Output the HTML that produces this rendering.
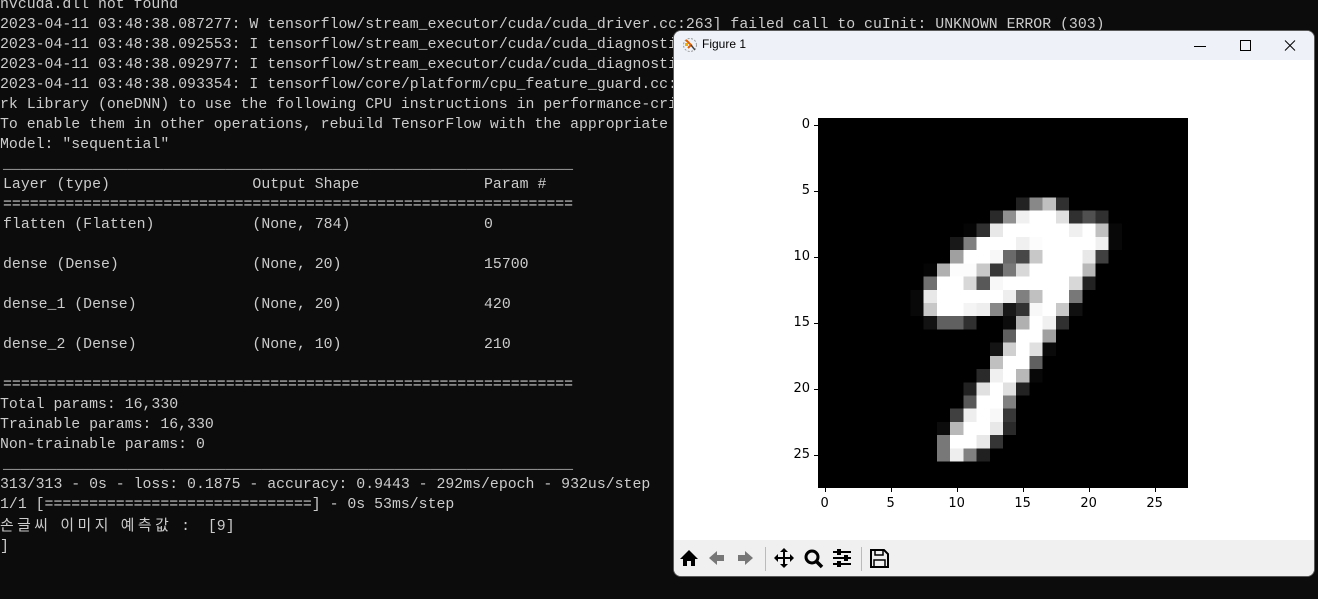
<!DOCTYPE html>
<html><head><meta charset="utf-8"><style>
body{margin:0;width:1318px;height:599px;background:#0c0c0c;overflow:hidden;position:relative;font-family:"Liberation Mono",monospace}
#term{position:absolute;left:0px;top:-5px;color:#cccccc;font-size:14.85px;line-height:20px;white-space:pre}
.t{padding-left:3px}
.k{font-family:"Noto Sans CJK KR","Liberation Mono",monospace;letter-spacing:3.5px}
#win{position:absolute;left:674px;top:31px;width:640px;height:545px;background:#fff;border-radius:7px;overflow:hidden;box-shadow:0 0 0 1px #5a5a5a}
#title{position:absolute;left:0;top:0;width:640px;height:29px;background:#eef2f8}
#title span{position:absolute;left:28px;top:6px;font:12px "Liberation Sans",sans-serif;color:#000}
#tb{position:absolute;left:0;top:509px;width:640px;height:36px;background:#f0f0f0}
.lbl{position:absolute;font:13px "DejaVu Sans","Liberation Sans",sans-serif;color:#000}
</style></head><body>
<div id="term">nvcuda.dll not found
2023-04-11 03:48:38.087277: W tensorflow/stream_executor/cuda/cuda_driver.cc:263] failed call to cuInit: UNKNOWN ERROR (303)
2023-04-11 03:48:38.092553: I tensorflow/stream_executor/cuda/cuda_diagnostics.cc:169] retrieving CUDA diagnostic information
2023-04-11 03:48:38.092977: I tensorflow/stream_executor/cuda/cuda_diagnostics.cc:176] hostname: DESKTOP
2023-04-11 03:48:38.093354: I tensorflow/core/platform/cpu_feature_guard.cc:193] This TensorFlow binary is optimized
rk Library (oneDNN) to use the following CPU instructions in performance-critical operations:  AVX AVX2
To enable them in other operations, rebuild TensorFlow with the appropriate compiler flags.
Model: "sequential"
<span class="t">________________________________________________________________</span>
<span class="t">Layer (type)                Output Shape              Param #</span>
<span class="t">================================================================</span>
<span class="t">flatten (Flatten)           (None, 784)               0</span>

<span class="t">dense (Dense)               (None, 20)                15700</span>

<span class="t">dense_1 (Dense)             (None, 20)                420</span>

<span class="t">dense_2 (Dense)             (None, 10)                210</span>

<span class="t">================================================================</span>
Total params: 16,330
Trainable params: 16,330
Non-trainable params: 0
<span class="t">________________________________________________________________</span>
313/313 - 0s - loss: 0.1875 - accuracy: 0.9443 - 292ms/epoch - 932us/step
1/1 [==============================] - 0s 53ms/step
<span class="k">손글씨</span> <span class="k">이미지</span> <span class="k">예측값</span> :  [9]
]</div>
<div id="win">
<div id="title">
<svg style="position:absolute;left:8px;top:6px" width="16" height="16" viewBox="0 0 16 16"><circle cx="8" cy="8" r="6.5" fill="none" stroke="#999" stroke-dasharray="2 1.5"/><path d="M4 3l5 5-3 3" stroke="#e06000" stroke-width="2" fill="none"/><path d="M9 8l4 5" stroke="#444" stroke-width="1.5"/><rect x="3" y="6" width="3" height="3" fill="#f0b000"/></svg>
<span>Figure 1</span>
<svg style="position:absolute;left:520px;top:8px" width="115" height="14"><line x1="0" y1="7.5" x2="12" y2="7.5" stroke="#000"/><rect x="46.5" y="1.5" width="10" height="10" fill="none" stroke="#000"/><path d="M91 1.5l10 10M101 1.5l-10 10" stroke="#000"/></svg>
</div>
<svg style="position:absolute;left:144px;top:87px" width="370" height="370" viewBox="0 0 28 28" shape-rendering="crispEdges">
<rect width="28" height="28" fill="#000"/>
<g id="px"></g>
</svg>
<div id="axes"></div>
<div id="tb">
<svg width="640" height="36" viewBox="0 0 640 36">
<path d="M6 19l9-9 9 9h-3v7h-4v-5h-4v5h-4v-7z" fill="#000"/>
<g fill="#777"><path d="M35 18l8-7v4h7v6h-7v4z"/><path d="M79 18l-8-7v4h-7v6h7v4z"/></g>
<line x1="91.5" y1="7" x2="91.5" y2="31" stroke="#bbb"/>
<path d="M110 8l4 4h-3v5h5v-3l4 4-4 4v-3h-5v5h3l-4 4-4-4h3v-5h-5v3l-4-4 4-4v3h5v-5h-3z" fill="#000"/>
<circle cx="138" cy="17" r="6" fill="none" stroke="#000" stroke-width="3"/><path d="M142 21l6 6" stroke="#000" stroke-width="3.5"/>
<g stroke="#000" stroke-width="2"><path d="M159 12h18M159 18h18M159 24h18"/></g>
<g fill="#000"><rect x="163" y="9" width="4" height="6"/><rect x="170" y="15" width="4" height="6"/><rect x="163" y="21" width="4" height="6"/></g>
<line x1="187.5" y1="7" x2="187.5" y2="31" stroke="#bbb"/>
<path d="M197 10h13l4 4v13h-17z" fill="none" stroke="#000" stroke-width="2"/><rect x="201" y="10" width="8" height="5" fill="none" stroke="#000" stroke-width="1.5"/><rect x="200" y="20" width="11" height="7" fill="none" stroke="#000" stroke-width="1.5"/>
</svg>
</div>
</div>
<script>
var d={6:{15:0x22,16:0x88,17:0xc0,18:0x30},
7:{13:0x2a,14:0x90,15:0xf0,16:255,17:255,18:0xe0,19:0x30,20:0x50,21:0x30},
8:{11:5,12:0x30,13:0xe8,14:255,15:255,16:255,17:255,18:255,19:0xf0,20:255,21:0xc0,22:8},
9:{10:0x18,11:0x80,12:255,13:255,14:255,15:0xf0,16:0xfc,17:255,18:255,19:255,20:255,21:0xf0,22:8},
10:{10:0xa0,11:255,12:255,13:0xf8,14:0x6a,15:0x48,16:0xc8,17:255,18:255,19:255,20:0xe8,21:0x40},
11:{8:5,9:0xb0,10:0xfc,11:0xfc,12:0xc8,13:0x38,14:0x78,15:0xd8,16:255,17:255,18:255,19:255,20:0xb8},
12:{8:0x70,9:255,10:255,11:0xd8,12:0x58,13:0xf8,14:255,15:255,16:255,17:255,18:255,19:0xd8,20:0x22},
13:{7:8,8:0xe8,9:255,10:255,11:255,12:255,13:255,14:0xee,15:0x80,16:0xc0,17:255,18:255,19:0x78},
14:{7:8,8:0xc8,9:255,10:255,11:0xf4,12:0xee,13:0x88,14:0x18,15:0x32,16:0xf8,17:255,18:0xc8,19:0x10},
15:{8:0x12,9:0x60,10:0x60,11:0x30,14:0x0c,15:0xb0,16:255,17:0xf0,18:0x30},
16:{14:0x60,15:255,16:255,17:0xa0},
17:{13:0x14,14:0xd0,15:255,16:0xe0,17:0x0a},
18:{13:0xc0,14:255,15:255,16:0x60},
19:{12:0x2a,13:0xf0,14:255,15:0xb8,16:8},
20:{11:0x22,12:0xe0,13:255,14:0xe0,15:0x22},
21:{11:0x58,12:255,13:255,14:0x80},
22:{10:0x40,11:0xee,12:255,13:0xf8,14:0x38},
23:{9:0x0c,10:0xb8,11:255,12:255,13:0xe8,14:0x2a},
24:{9:0x78,10:255,11:255,12:0xe8,13:0x35},
25:{9:0x78,10:0xee,11:0x80,12:0x20}};
var s="";for(var r in d)for(var c in d[r]){var v=d[r][c];s+='<rect x="'+c+'" y="'+r+'" width="1" height="1" fill="rgb('+v+','+v+','+v+')"/>';}
document.getElementById("px").innerHTML=s;
var a="";for(var i=0;i<6;i++){var v=i*5,p=13.2*(v+0.5);
a+='<div style="position:absolute;left:'+(144+p)+'px;top:457px;width:1px;height:4px;background:#000"></div>';
a+='<div class="lbl" style="left:'+(144+p-15)+'px;top:465px;width:30px;text-align:center">'+v+'</div>';
a+='<div style="position:absolute;left:140px;top:'+(87+p)+'px;width:4px;height:1px;background:#000"></div>';
a+='<div class="lbl" style="left:100px;top:'+(87+p-8)+'px;width:36px;text-align:right">'+v+'</div>';}
document.getElementById("axes").innerHTML=a;
</script>
</body></html>
